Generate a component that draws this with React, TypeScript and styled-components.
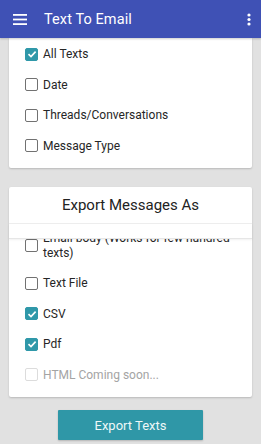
import * as React from 'react';
import styled, { createGlobalStyle } from 'styled-components';

const GlobalStyle = createGlobalStyle`
  html, body {
    margin: 0;
    padding: 0;
    background: #e1e1e1;
    font-family: Roboto, "Noto Sans", sans-serif;
  }
`;

const Screen = styled.div`
  width: 261px;
  height: 444px;
  overflow: hidden;
  display: flex;
  flex-direction: column;
  background: #e1e1e1;
`;

const AppBar = styled.div`
  flex: 0 0 38px;
  display: flex;
  align-items: center;
  padding: 0 10px 0 13px;
  background: #3f51b5;
  color: #ffffff;
  box-shadow: 0 1px 2px rgba(0, 0, 0, 0.2);
  position: relative;
  z-index: 2;
`;

const Title = styled.div`
  flex: 1;
  margin-left: 17px;
  font-size: 14.5px;
  letter-spacing: 0.1px;
`;

const Content = styled.div`
  flex: 1;
  display: flex;
  flex-direction: column;
  gap: 19px;
  padding: 0 9px;
`;

const Card = styled.div`
  background: #ffffff;
  border-radius: 0 0 2px 2px;
  box-shadow: 0 1px 2px rgba(0, 0, 0, 0.18);
`;

const OptionsCard = styled(Card)`
  padding: 1px 0 7px;
`;

const ExportCard = styled(Card)`
  border-radius: 2px;
  padding-bottom: 7px;
`;

const CardTitle = styled.div`
  height: 36px;
  display: flex;
  align-items: center;
  justify-content: center;
  font-size: 15px;
  color: #222222;
  border-bottom: 1px solid #eeeeee;
`;

const Band = styled.div`
  height: 14px;
  border-bottom: 1px solid #e6e6e6;
  box-shadow: 0 1px 2px rgba(0, 0, 0, 0.06);
  position: relative;
  z-index: 1;
`;

const Viewport = styled.div`
  overflow: hidden;
`;

const ScrolledList = styled.div<{ $offset: number }>`
  margin-top: ${p => -p.$offset}px;
`;

const Item = styled.div<{ $disabled?: boolean }>`
  display: flex;
  align-items: center;
  gap: 5px;
  padding: 8px 16px;
  font-size: 12px;
  line-height: 14.5px;
  color: ${p => (p.$disabled ? '#a4a4a4' : '#262626')};
`;

const Box = styled.span<{ $checked?: boolean; $disabled?: boolean }>`
  flex: 0 0 auto;
  width: 13px;
  height: 13px;
  box-sizing: border-box;
  border-radius: 2px;
  border: 1.5px solid ${p => (p.$disabled ? '#dcdcdc' : p.$checked ? '#2f98a9' : '#717171')};
  background: ${p => (p.$checked ? '#2f98a9' : 'transparent')};
  display: flex;
  align-items: center;
  justify-content: center;
`;

const Footer = styled.div`
  display: flex;
  justify-content: center;
  margin-top: -6px;
`;

const ExportButton = styled.button`
  width: 145px;
  height: 30px;
  border: none;
  border-radius: 1px;
  background: #2f97a7;
  color: #eef7f8;
  font-family: Roboto, "Noto Sans", sans-serif;
  font-size: 13px;
  box-shadow: 0 1px 2px rgba(0, 0, 0, 0.2);
`;

const MenuIcon = () => (
  <svg width="14" height="11" viewBox="0 0 14 11">
    <rect x="0" y="0" width="14" height="1.8" fill="#fff" />
    <rect x="0" y="4.6" width="14" height="1.8" fill="#fff" />
    <rect x="0" y="9.2" width="14" height="1.8" fill="#fff" />
  </svg>
);

const MoreIcon = () => (
  <svg width="4" height="13" viewBox="0 0 4 13">
    <circle cx="2" cy="2" r="1.6" fill="#fff" />
    <circle cx="2" cy="6.5" r="1.6" fill="#fff" />
    <circle cx="2" cy="11" r="1.6" fill="#fff" />
  </svg>
);

const Check = () => (
  <svg width="10" height="10" viewBox="0 0 10 10">
    <path d="M1.5 5.2 L4 7.6 L8.6 2.6" stroke="#fff" strokeWidth="1.6" fill="none" />
  </svg>
);

interface Option {
  label: string;
  checked?: boolean;
  disabled?: boolean;
}

const FILTERS: Option[] = [
  { label: 'All Texts', checked: true },
  { label: 'Date' },
  { label: 'Threads/Conversations' },
  { label: 'Message Type' },
];

const FORMATS: Option[] = [
  { label: 'Email body (Works for few hundred texts)' },
  { label: 'Text File' },
  { label: 'CSV', checked: true },
  { label: 'Pdf', checked: true },
  { label: 'HTML Coming soon...', disabled: true },
];

const OptionRow = ({ option }: { option: Option }) => (
  <Item $disabled={option.disabled}>
    <Box $checked={option.checked} $disabled={option.disabled}>
      {option.checked && <Check />}
    </Box>
    <span>{option.label}</span>
  </Item>
);

export default function App() {
  return (
    <Screen>
      <GlobalStyle />
      <AppBar>
        <MenuIcon />
        <Title>Text To Email</Title>
        <MoreIcon />
      </AppBar>
      <Content>
        <OptionsCard>
          {FILTERS.map(f => <OptionRow key={f.label} option={f} />)}
        </OptionsCard>
        <ExportCard>
          <CardTitle>Export Messages As</CardTitle>
          <Band />
          <Viewport>
            <ScrolledList $offset={16}>
              {FORMATS.map(f => <OptionRow key={f.label} option={f} />)}
            </ScrolledList>
          </Viewport>
        </ExportCard>
        <Footer>
          <ExportButton>Export Texts</ExportButton>
        </Footer>
      </Content>
    </Screen>
  );
}
